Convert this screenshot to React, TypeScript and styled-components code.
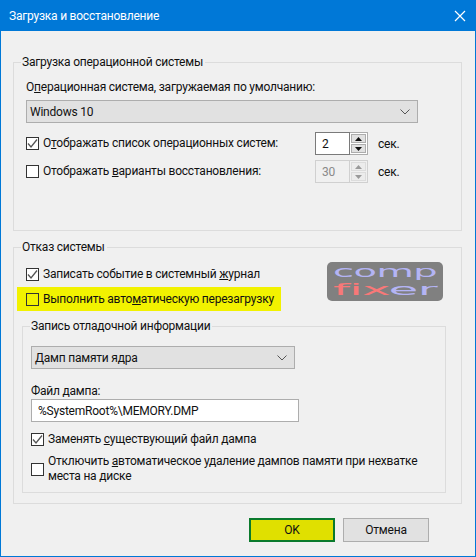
import styled, { createGlobalStyle } from "styled-components";

const GlobalStyle = createGlobalStyle`
  html, body {
    margin: 0;
    padding: 0;
    background: #f0f0f0;
  }
  * {
    box-sizing: border-box;
  }
`;

const Dialog = styled.div`
  width: 476px;
  height: 557px;
  display: flex;
  flex-direction: column;
  background: #f0f0f0;
  border: 1px solid #0078d7;
  border-top: none;
  font-family: "Roboto", "Noto Sans", sans-serif;
  font-size: 12px;
  letter-spacing: -0.22px;
  color: #111;
`;

const TitleBar = styled.div`
  height: 31px;
  margin: 0 -1px;
  padding: 0 9px;
  flex: none;
  display: flex;
  align-items: center;
  justify-content: space-between;
  background: #0078d7;
  color: #fff;
`;

const CloseIcon = styled.svg`
  width: 12px;
  height: 12px;
  margin-right: 1px;
`;

const Content = styled.div`
  padding: 22px 13px 0 12px;
  display: flex;
  flex-direction: column;
  gap: 7px;
`;

const Group = styled.fieldset<{ $height: number; $left?: number }>`
  margin: 0;
  height: ${(p) => p.$height}px;
  padding: 0 0 0 ${(p) => p.$left ?? 12}px;
  border: 1px solid #dcdcdc;
  min-width: 0;
`;

const Legend = styled.legend<{ $shift?: number }>`
  padding: 0 2px 0 1px;
  margin-left: ${(p) => p.$shift ?? -5}px;
  line-height: 18px;
  height: 18px;
`;

const FieldLabel = styled.div<{ $top: number }>`
  margin-top: ${(p) => p.$top}px;
  line-height: 15px;
  height: 15px;
`;

const DropDown = styled.div<{ $width: number; $top: number }>`
  width: ${(p) => p.$width}px;
  height: 23px;
  margin-top: ${(p) => p.$top}px;
  padding: 0 7px 0 3px;
  display: flex;
  align-items: center;
  justify-content: space-between;
  background: #e1e1e1;
  border: 1px solid #adadad;
`;

const Chevron = styled.svg`
  width: 10px;
  height: 6px;
`;

const CheckRow = styled.div<{ $top?: number; $highlight?: boolean }>`
  display: flex;
  align-items: center;
  gap: 4px;
  margin-top: ${(p) => p.$top ?? 0}px;
  min-height: 23px;
  ${(p) =>
    p.$highlight &&
    `
    width: 264px;
    height: 24px;
    margin-left: -9px;
    padding-left: 9px;
    background: #f2f200;
  `}
`;

const Box = styled.span<{ $yellow?: boolean }>`
  width: 13px;
  height: 13px;
  flex: none;
  display: flex;
  align-items: center;
  justify-content: center;
  background: ${(p) => (p.$yellow ? "#f2f200" : "#fff")};
  border: 1px solid #333;
`;

const CheckMark = styled.svg`
  width: 11px;
  height: 11px;
`;

const RowText = styled.span<{ $width?: number }>`
  width: ${(p) => (p.$width ? `${p.$width}px` : "auto")};
  line-height: 15px;
  flex: none;
`;

const Spin = styled.div<{ $disabled?: boolean }>`
  width: 53px;
  height: 23px;
  display: flex;
  border: 1px solid ${(p) => (p.$disabled ? "#d0d0d0" : "#adadad")};
  background: ${(p) => (p.$disabled ? "#f0f0f0" : "#fff")};
  color: ${(p) => (p.$disabled ? "#8a8a8a" : "#111")};
`;

const SpinValue = styled.div<{ $disabled?: boolean }>`
  width: 35px;
  margin: -1px 0 -1px -1px;
  padding-left: 6px;
  display: flex;
  align-items: center;
  border: 1px solid ${(p) => (p.$disabled ? "#d0d0d0" : "#7a7a7a")};
`;

const SpinButtons = styled.div`
  flex: 1;
  display: flex;
  flex-direction: column;
  gap: 1px;
  padding: 1px;
`;

const SpinButton = styled.div<{ $disabled?: boolean }>`
  flex: 1;
  display: flex;
  align-items: center;
  justify-content: center;
  background: ${(p) => (p.$disabled ? "#ececec" : "#e1e1e1")};
  border: 1px solid ${(p) => (p.$disabled ? "#dcdcdc" : "#adadad")};
`;

const Arrow = styled.svg`
  width: 7px;
  height: 4px;
`;

const Unit = styled.span`
  margin-left: 6px;
`;

const FailureTop = styled.div`
  display: flex;
  justify-content: space-between;
  padding-right: 18px;
`;

const Logo = styled.svg`
  width: 116px;
  height: 39px;
  margin-top: 6px;
`;

const TextField = styled.div`
  width: 268px;
  height: 23px;
  padding-left: 6px;
  display: flex;
  align-items: center;
  background: #fff;
  border: 1px solid #adadad;
`;

const InnerGroup = styled(Group)`
  width: 424px;
  margin: 6px 0 0 -4px;
`;

const Footer = styled.div`
  margin-top: 14px;
  padding-right: 46px;
  display: flex;
  justify-content: flex-end;
  gap: 8px;
`;

const Button = styled.div<{ $primary?: boolean }>`
  width: 86px;
  height: 24px;
  display: flex;
  align-items: center;
  justify-content: center;
  background: ${(p) => (p.$primary ? "#e0e000" : "#e1e1e1")};
  border: ${(p) => (p.$primary ? "2px solid #0a7a2c" : "1px solid #adadad")};
`;

function Check({ checked, yellow }: { checked?: boolean; yellow?: boolean }) {
  return (
    <Box $yellow={yellow}>
      {checked && (
        <CheckMark viewBox="0 0 11 11">
          <path d="M1 5.5 L4 9 L10 1.5" fill="none" stroke="#555" strokeWidth="1.3" />
        </CheckMark>
      )}
    </Box>
  );
}

function Spinner({ value, disabled }: { value: string; disabled?: boolean }) {
  const color = disabled ? "#9a9a9a" : "#111";
  return (
    <Spin $disabled={disabled}>
      <SpinValue $disabled={disabled}>{value}</SpinValue>
      <SpinButtons>
        <SpinButton $disabled={disabled}>
          <Arrow viewBox="0 0 7 4">
            <path d="M3.5 0 L7 4 H0 Z" fill={color} />
          </Arrow>
        </SpinButton>
        <SpinButton $disabled={disabled}>
          <Arrow viewBox="0 0 7 4">
            <path d="M0 0 H7 L3.5 4 Z" fill={color} />
          </Arrow>
        </SpinButton>
      </SpinButtons>
    </Spin>
  );
}

function Caret() {
  return (
    <Chevron viewBox="0 0 10 6">
      <path d="M0.5 0.5 L5 5 L9.5 0.5" fill="none" stroke="#555" strokeWidth="1" />
    </Chevron>
  );
}

export default function App() {
  return (
    <>
      <GlobalStyle />
      <Dialog>
        <TitleBar>
          <span>Загрузка и восстановление</span>
          <CloseIcon viewBox="0 0 12 12">
            <path d="M1 1 L11 11 M11 1 L1 11" stroke="#fff" strokeWidth="1.2" />
          </CloseIcon>
        </TitleBar>
        <Content>
          <Group $height={178}>
            <Legend>Загрузка операционной системы</Legend>
            <FieldLabel $top={9}>
              О<u>п</u>ерационная система, загружаемая по умолчанию:
            </FieldLabel>
            <DropDown $width={392} $top={5}>
              Windows 10
              <Caret />
            </DropDown>
            <CheckRow $top={9}>
              <Check checked />
              <RowText $width={268}>
                О<u>т</u>ображать список операционных систем:
              </RowText>
              <Spinner value="2" />
              <Unit>сек.</Unit>
            </CheckRow>
            <CheckRow $top={5}>
              <Check />
              <RowText $width={268}>
                Отображать <u>в</u>арианты восстановления:
              </RowText>
              <Spinner value="30" disabled />
              <Unit>сек.</Unit>
            </CheckRow>
          </Group>
          <Group $height={266}>
            <Legend>Отказ системы</Legend>
            <FailureTop>
              <div>
                <CheckRow $top={7}>
                  <Check checked />
                  <RowText>
                    Записать событие в системный <u>ж</u>урнал
                  </RowText>
                </CheckRow>
                <CheckRow $top={1} $highlight>
                  <Check yellow />
                  <RowText>
                    Выполнить авто<u>м</u>атическую перезагрузку
                  </RowText>
                </CheckRow>
              </div>
              <Logo viewBox="0 0 116 39">
                <rect width="116" height="39" rx="5" fill="#808080" />
                <text x="6" y="15" fontFamily="DejaVu Sans ExtraLight, DejaVu Sans" fontSize="15" fill="#b4b4f4" textLength="104" lengthAdjust="spacingAndGlyphs">
                  comp
                </text>
                <text x="6" y="33" fontFamily="DejaVu Sans ExtraLight, DejaVu Sans" fontSize="15" fill="#b4b4f4" textLength="104" lengthAdjust="spacingAndGlyphs">
                  <tspan fill="#f87878">fix</tspan>er
                </text>
              </Logo>
            </FailureTop>
            <InnerGroup $height={176} $left={8}>
              <Legend $shift={-1}>Запись отладочной информации</Legend>
              <DropDown $width={264} $top={11}>
                Дамп памяти ядра
                <Caret />
              </DropDown>
              <FieldLabel $top={15}>Файл дампа:</FieldLabel>
              <TextField>%SystemRoot%\MEMORY.DMP</TextField>
              <CheckRow $top={6}>
                <Check checked />
                <RowText>
                  Заменять <u>с</u>уществующий файл дампа
                </RowText>
              </CheckRow>
              <CheckRow $top={3}>
                <Check />
                <RowText>
                  Отключить <u>а</u>втоматическое удаление дампов памяти при нехватке
                  <br />
                  места на диске
                </RowText>
              </CheckRow>
            </InnerGroup>
          </Group>
        </Content>
        <Footer>
          <Button $primary>OK</Button>
          <Button>Отмена</Button>
        </Footer>
      </Dialog>
    </>
  );
}
